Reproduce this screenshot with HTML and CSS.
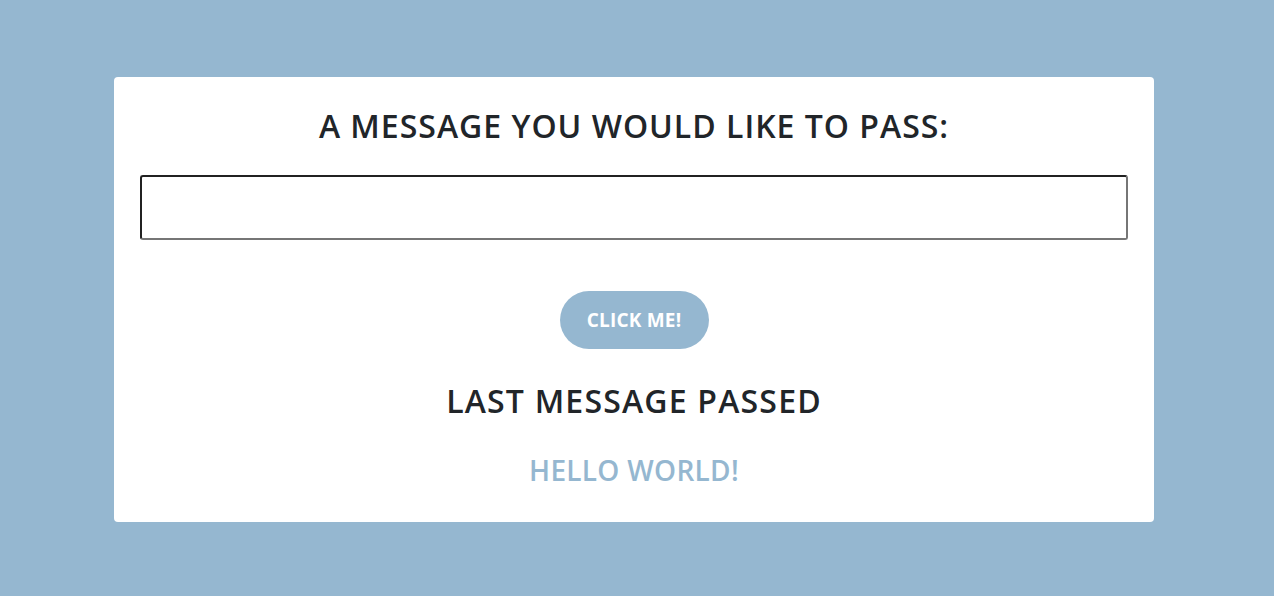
FILE: index.html
```html
<!DOCTYPE html>
<html>
<head>
<meta charset="utf-8">
<link rel="stylesheet" href="styles.css">
</head>
<body>
<main class="card">
  <h1 class="title">A MESSAGE YOU WOULD LIKE TO PASS:</h1>
  <input class="msg-input" type="text">
  <button class="btn">CLICK ME!</button>
  <h2 class="subtitle">LAST MESSAGE PASSED</h2>
  <p class="last">HELLO WORLD!</p>
</main>
</body>
</html>
```
FILE: styles.css
```css
html, body {
  margin: 0;
  padding: 0;
}
body {
  background: #95b7d0;
  font-family: "Open Sans", "Noto Sans", sans-serif;
  color: #212529;
  height: 596px;
  padding: 77px 6px 0 0;
  box-sizing: border-box;
}
.card {
  width: 1040px;
  height: 445px;
  box-sizing: border-box;
  margin: 0 auto;
  background: #fff;
  border-radius: 4px;
  padding: 0 26px;
  display: flex;
  flex-direction: column;
  align-items: center;
}
.title {
  margin: 26px 0 0;
  font-size: 32px;
  font-weight: 600;
  line-height: 46px;
  letter-spacing: 1px;
}
.msg-input {
  margin-top: 26px;
  align-self: stretch;
  height: 65px;
  box-sizing: border-box;
  border-style: solid;
  border-width: 2px;
  border-color: #212121 #767676 #767676 #212121;
  border-radius: 3px;
  outline: none;
  font-size: 20px;
}
.btn {
  margin-top: 51px;
  width: 149px;
  height: 58px;
  border: none;
  border-radius: 29px;
  background: #95b7d0;
  color: #fff;
  font-family: inherit;
  font-weight: 700;
  font-size: 19px;
  letter-spacing: 0.2px;
  cursor: pointer;
}
.subtitle {
  margin: 29px 0 0;
  font-size: 32px;
  font-weight: 600;
  line-height: 46px;
  letter-spacing: 1.2px;
}
.last {
  margin: 27px 0 0;
  font-size: 28px;
  font-weight: 600;
  line-height: 38px;
  letter-spacing: 0.3px;
  color: #95b7d0;
}
```
